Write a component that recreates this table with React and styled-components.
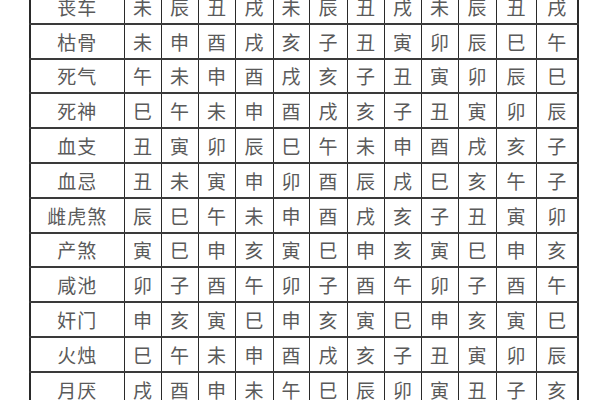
import React from 'react'
import styled, { createGlobalStyle } from 'styled-components'

const GlobalStyle = createGlobalStyle`
  html, body {
    margin: 0;
    padding: 0;
    background: #fff;
    overflow: hidden;
  }
`

const Page = styled.div`
  width: 600px;
  height: 400px;
  overflow: hidden;
  padding-left: 29px;
  box-sizing: border-box;
`

const Table = styled.table`
  margin-top: -12px;
  border-collapse: collapse;
  table-layout: fixed;
  width: 548px;
  font-family: "Noto Sans CJK SC", "Noto Sans CJK TC", serif;
  color: #5a5a5a;

  td {
    border-top: 2px solid #3a3a3a;
    border-bottom: 2px solid #3a3a3a;
    border-left: 1px solid #2a2a2a;
    border-right: 1px solid #2a2a2a;
    padding: 0;
    text-align: center;
    vertical-align: middle;
    font-size: 19px;
    line-height: 1;
  }

  td:first-child {
    border-left-width: 2px;
  }

  td:last-child {
    border-right-width: 2px;
  }
`

const Row = styled.tr`
  height: 34.8px;
`

const Label = styled.td`
  letter-spacing: 1px;
  font-weight: 400;
`

const Cell = styled.td`
  font-weight: 400;
`

const widths = [94, 37, 37, 37, 38, 36, 38, 37, 37, 37, 38, 40, 42]

// 神煞 name, then its branch for each of the twelve months
const rows = [
  ['丧车', '未辰丑戌未辰丑戌未辰丑戌'],
  ['枯骨', '未申酉戌亥子丑寅卯辰巳午'],
  ['死气', '午未申酉戌亥子丑寅卯辰巳'],
  ['死神', '巳午未申酉戌亥子丑寅卯辰'],
  ['血支', '丑寅卯辰巳午未申酉戌亥子'],
  ['血忌', '丑未寅申卯酉辰戌巳亥午子'],
  ['雌虎煞', '辰巳午未申酉戌亥子丑寅卯'],
  ['产煞', '寅巳申亥寅巳申亥寅巳申亥'],
  ['咸池', '卯子酉午卯子酉午卯子酉午'],
  ['奸门', '申亥寅巳申亥寅巳申亥寅巳'],
  ['火烛', '巳午未申酉戌亥子丑寅卯辰'],
  ['月厌', '戌酉申未午巳辰卯寅丑子亥'],
]

export default function App() {
  return (
    <>
      <GlobalStyle />
      <Page>
        <Table>
          <colgroup>
            {widths.map((w, i) => (
              <col key={i} style={{ width: w }} />
            ))}
          </colgroup>
          <tbody>
            {rows.map(([name, branches]) => (
              <Row key={name}>
                <Label>{name}</Label>
                {branches.split('').map((b, i) => (
                  <Cell key={i}>{b}</Cell>
                ))}
              </Row>
            ))}
          </tbody>
        </Table>
      </Page>
    </>
  )
}
